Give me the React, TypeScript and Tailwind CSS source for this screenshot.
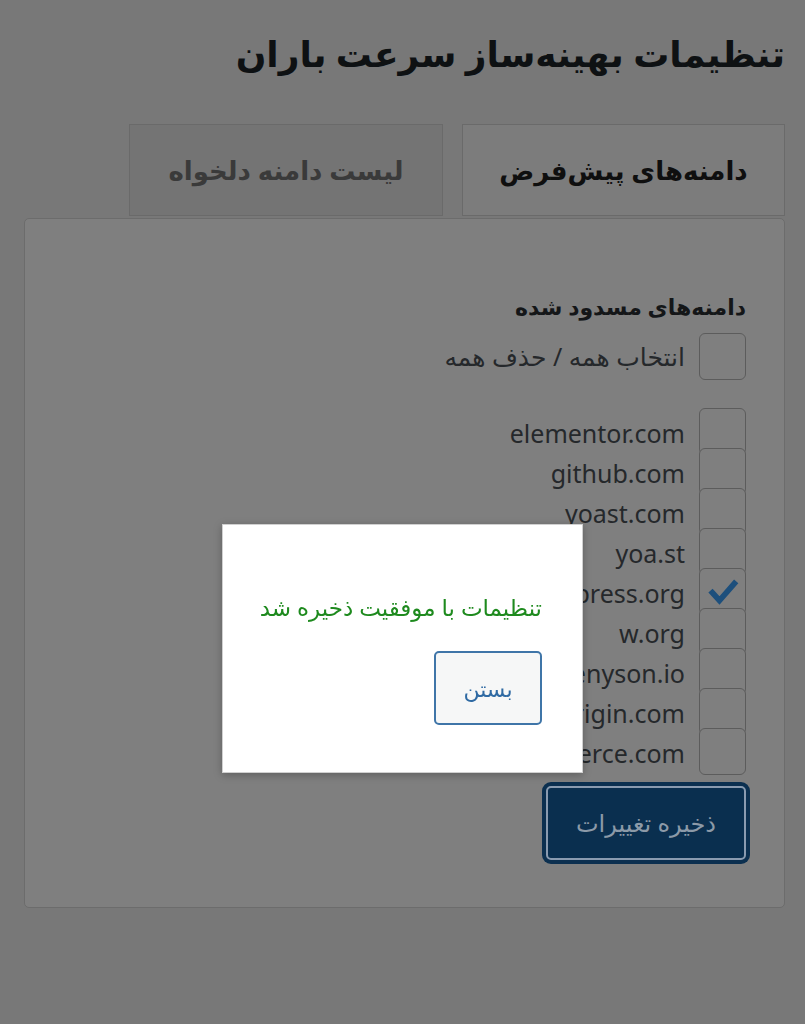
const domains = [
  { name: 'elementor.com', checked: false },
  { name: 'github.com', checked: false },
  { name: 'yoast.com', checked: false },
  { name: 'yoa.st', checked: false },
  { name: 'wordpress.org', checked: true },
  { name: 'w.org', checked: false },
  { name: 'freemius.tenyson.io', checked: false },
  { name: 'cdn.wporigin.com', checked: false },
  { name: 'woocommerce.com', checked: false },
]

function Box({ checked }: { checked?: boolean }) {
  return (
    <span className="relative flex h-[47px] w-[47px] shrink-0 items-center justify-center rounded-[6px] border border-[#5c5c5c] bg-[#7f7f7f]">
      {checked && (
        <svg viewBox="0 0 24 24" className="h-[34px] w-[34px]" fill="none">
          <path d="M4.5 12.5l5 5.5L20 6" stroke="#1d4f7c" strokeWidth="4" strokeLinecap="square" strokeLinejoin="miter" />
        </svg>
      )}
    </span>
  )
}

export default function App() {
  return (
    <div
      dir="rtl"
      className="min-h-screen bg-[#787878] pr-5 pl-6 pt-[26px]"
      style={{ fontFamily: '"Noto Sans", "DejaVu Sans", sans-serif' }}
    >
      <h1 className="text-[36px] font-bold leading-[56px] text-[#0e1113]">تنظیمات بهینه‌ساز سرعت باران</h1>

      <div className="mt-[42px] flex gap-[19px]">
        <button className="flex h-[92px] w-[323px] items-center justify-center border border-[#6a6a6a] bg-[#7c7c7c] text-[26px] font-bold text-[#0f0f0f]">
          دامنه‌های پیش‌فرض
        </button>
        <button className="flex h-[92px] w-[314px] items-center justify-center border border-[#6a6a6a] bg-[#747474] text-[26px] font-bold text-[#3a3a3a]">
          لیست دامنه دلخواه
        </button>
      </div>

      <div className="mt-[2px] rounded-[5px] border border-[#6c6c6c] bg-[#7f7f7f] pt-[70px] pr-[38px] pb-[47px]">
        <h2 className="text-[22px] font-bold leading-[34px] text-[#141618]">دامنه‌های مسدود شده</h2>

        <label className="mt-[10px] flex items-center gap-[14px]">
          <Box />
          <span className="text-[25px] leading-[47px] text-[#25282b]">انتخاب همه / حذف همه</span>
        </label>

        <div className="mt-[28px] flex flex-col">
          {domains.map((d) => (
            <label key={d.name} className="flex h-10 items-start gap-[14px]">
              <Box checked={d.checked} />
              <span dir="ltr" className="text-[25px] leading-[50px] text-[#25282b]">
                {d.name}
              </span>
            </label>
          ))}
        </div>

        <div className="mt-[18px]">
          <button className="h-[74px] w-[200px] rounded-[5px] border-2 border-[#8a9bb0] bg-[#0a2f4f] text-[24px] text-[#8c9aa8] ring-[4px] ring-[#0c3050]">
            ذخیره تغییرات
          </button>
        </div>
      </div>

      <div className="fixed top-[524px] left-[222px] w-[361px] border border-[#d0d0d0] bg-white pt-[62px] pr-10 pb-[47px] pl-6 shadow-[0_2px_8px_rgba(0,0,0,0.25)]">
        <p className="text-[23px] leading-[40px] text-[#1e8a1e]">تنظیمات با موفقیت ذخیره شد</p>
        <button className="mt-[24px] h-[74px] w-[108px] rounded-[5px] border-2 border-[#3f75a8] bg-[#f6f7f7] text-[22px] text-[#2f6aa3]">
          بستن
        </button>
      </div>
    </div>
  )
}
